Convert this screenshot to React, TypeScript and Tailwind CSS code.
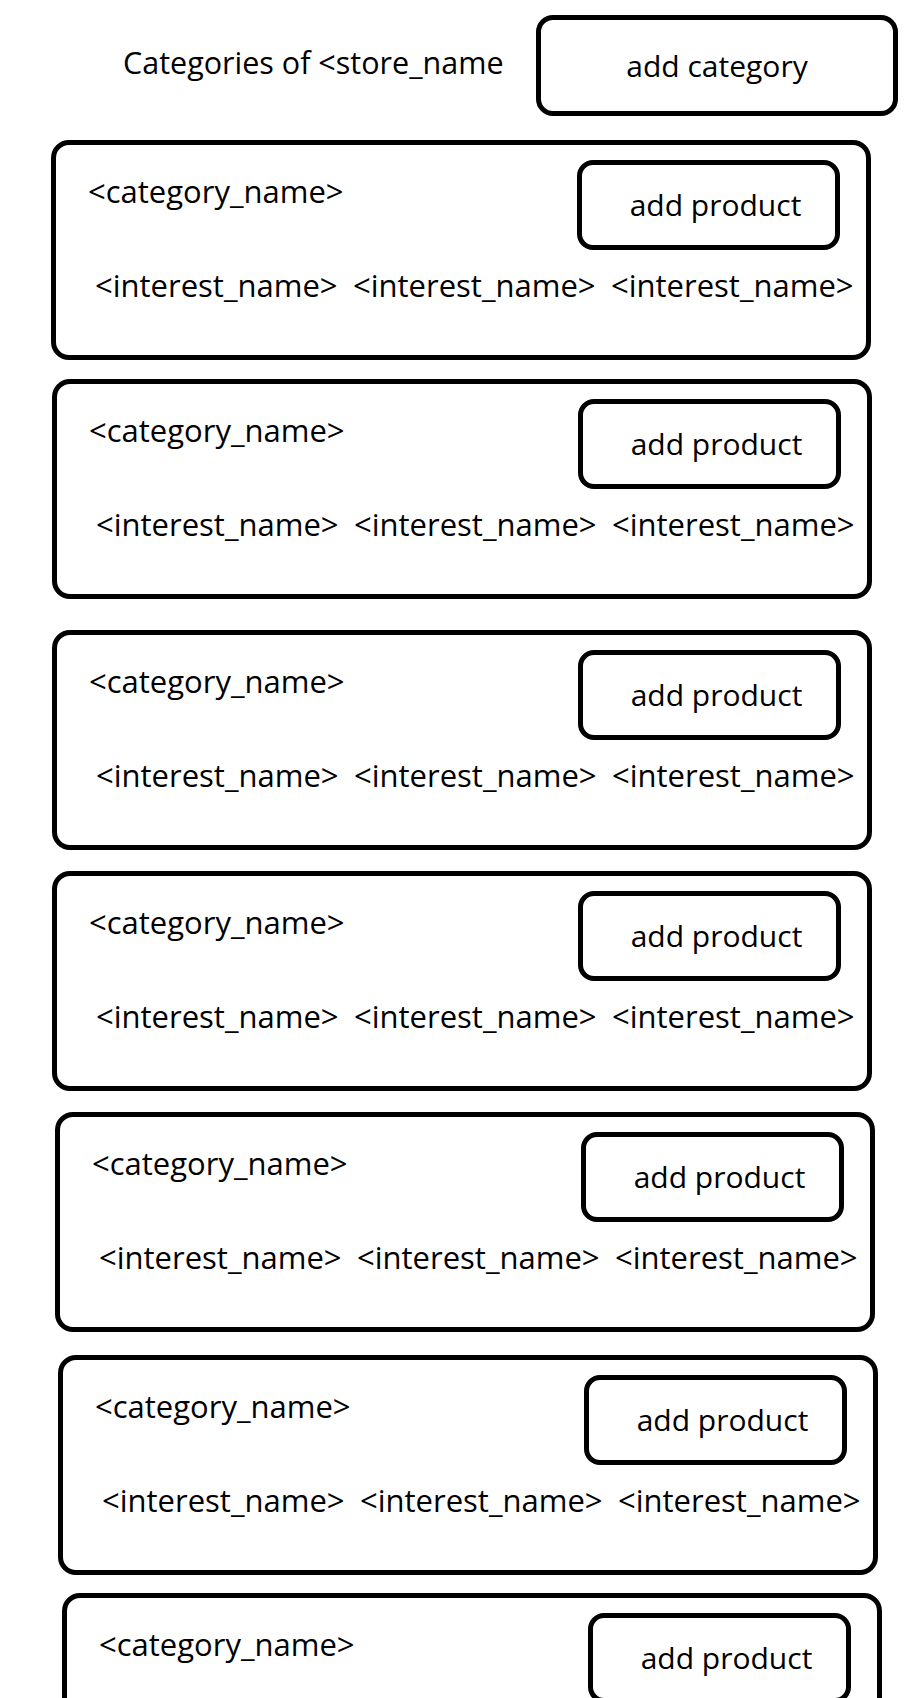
import React from "react";

// ─── Wireframe data ───────────────────────────────────────
const CATEGORIES = [
  { id: 1, place: "mt-[24px] ml-[51px]" },
  { id: 2, place: "mt-[19px] ml-[52px]" },
  { id: 3, place: "mt-[31px] ml-[52px]" },
  { id: 4, place: "mt-[21px] ml-[52px]" },
  { id: 5, place: "mt-[21px] ml-[55px]" },
  { id: 6, place: "mt-[23px] ml-[58px]" },
  { id: 7, place: "mt-[18px] ml-[62px]" },
];

const INTERESTS = ["<interest_name>", "<interest_name>", "<interest_name>"];

function CategoryCard({ place }: { place: string }) {
  return (
    <div className={`w-[820px] h-[220px] shrink-0 border-[5px] border-black rounded-[18px] ${place}`}>
      <div className="flex items-start pt-[15px]">
        <span className="ml-[32px] mt-[16px] w-[489px] text-[31px] leading-none whitespace-nowrap">
          {"<category_name>"}
        </span>
        <button className="w-[263px] h-[90px] border-[5px] border-black rounded-[16px] pl-[14px] leading-none">
          add product
        </button>
      </div>
      <div className="flex pl-[39px] mt-[20px] text-[31px]">
        {INTERESTS.map((name, i) => (
          <span key={i} className="w-[258px] shrink-0 leading-none whitespace-nowrap">
            {name}
          </span>
        ))}
      </div>
    </div>
  );
}

export default function App() {
  return (
    <div
      className="h-[1698px] w-[906px] bg-white text-black text-[30px] overflow-hidden"
      style={{ fontFamily: '"Open Sans", "Noto Sans", sans-serif' }}
    >
      {/* Header */}
      <div className="flex items-start pt-[15px] pl-[123px]">
        <span className="mt-[32px] w-[413px] text-[30.5px] leading-none whitespace-nowrap">
          Categories of &lt;store_name
        </span>
        <button className="w-[362px] h-[101px] border-[5px] border-black rounded-[17px] leading-none">
          add category
        </button>
      </div>

      {/* Category list */}
      <div className="flex flex-col">
        {CATEGORIES.map((c) => (
          <CategoryCard key={c.id} place={c.place} />
        ))}
      </div>
    </div>
  );
}
